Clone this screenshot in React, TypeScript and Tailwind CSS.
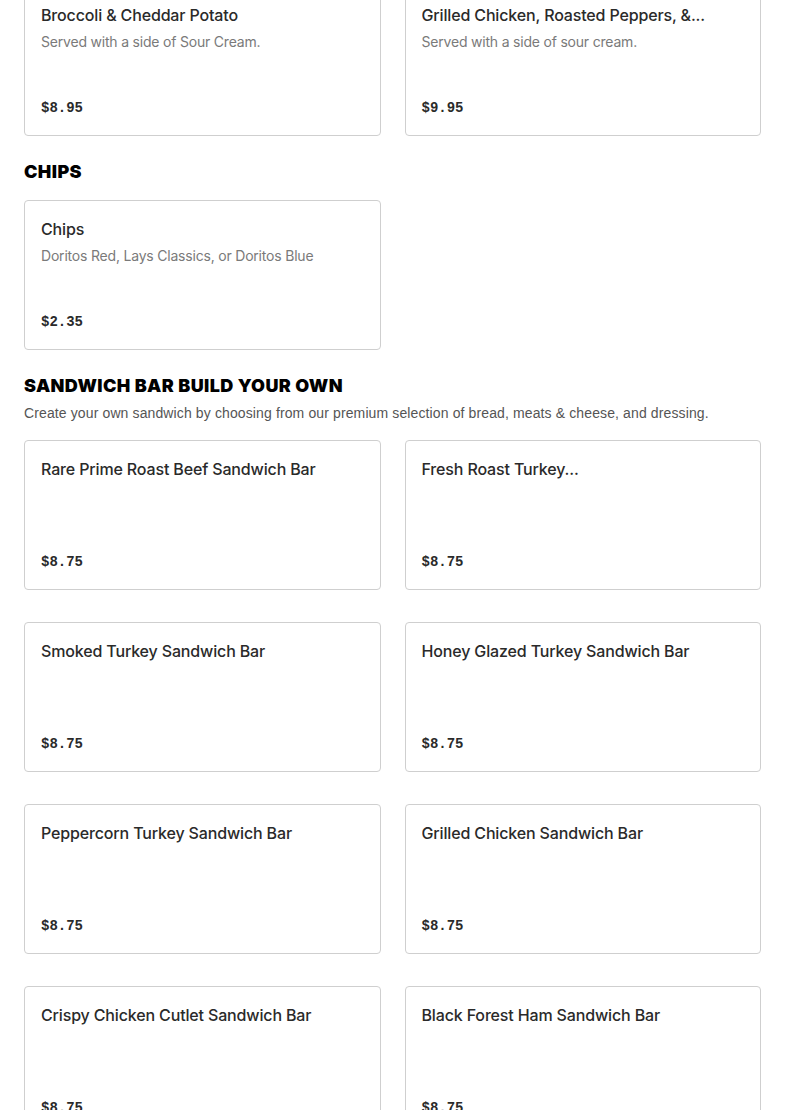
import React from "react";

type Item = {
  name: string;
  description?: string;
  price: string;
};

const potatoes: Item[] = [
  {
    name: "Broccoli & Cheddar Potato",
    description: "Served with a side of Sour Cream.",
    price: "$8.95",
  },
  {
    name: "Grilled Chicken, Roasted Peppers, &...",
    description: "Served with a side of sour cream.",
    price: "$9.95",
  },
];

const chips: Item[] = [
  {
    name: "Chips",
    description: "Doritos Red, Lays Classics, or Doritos Blue",
    price: "$2.35",
  },
];

const sandwichBar: Item[] = [
  { name: "Rare Prime Roast Beef Sandwich Bar", price: "$8.75" },
  { name: "Fresh Roast Turkey...", price: "$8.75" },
  { name: "Smoked Turkey Sandwich Bar", price: "$8.75" },
  { name: "Honey Glazed Turkey Sandwich Bar", price: "$8.75" },
  { name: "Peppercorn Turkey Sandwich Bar", price: "$8.75" },
  { name: "Grilled Chicken Sandwich Bar", price: "$8.75" },
  { name: "Crispy Chicken Cutlet Sandwich Bar", price: "$8.75" },
  { name: "Black Forest Ham Sandwich Bar", price: "$8.75" },
];

const MenuCard: React.FC<{ item: Item }> = ({ item }) => (
  <div className="h-[150px] flex flex-col rounded border border-[#cfcfcf] bg-white px-4 pt-4 pb-[17px]">
    <h3 className="text-[16px] leading-6 font-medium tracking-[-0.15px] text-[#2a2a2a] truncate font-['Inter',sans-serif]">
      {item.name}
    </h3>
    {item.description && (
      <p className="mt-[5px] text-[14px] leading-5 tracking-[-0.2px] text-[#7a7a7a] font-['Inter',sans-serif]">
        {item.description}
      </p>
    )}
    <div className="mt-auto text-[14px] leading-5 font-bold text-[#2a2a2a] font-['Liberation_Mono',monospace]">
      {item.price}
    </div>
  </div>
);

const Section: React.FC<{
  title?: string;
  subtitle?: string;
  items: Item[];
}> = ({ title, subtitle, items }) => (
  <section className="pt-6 first:pt-0">
    {title && (
      <h2 className="text-[18px] leading-6 font-black tracking-[0.4px] text-black uppercase font-['Inter',sans-serif]">
        {title}
      </h2>
    )}
    {subtitle && (
      <p className="mt-[5px] text-[14px] leading-5 tracking-[0.12px] text-[#555555] font-['Liberation_Sans',Arial,sans-serif]">
        {subtitle}
      </p>
    )}
    <div
      className={`grid grid-cols-2 gap-x-6 gap-y-8 ${title ? (subtitle ? "mt-[17px]" : "mt-4") : ""}`}
    >
      {items.map((item) => (
        <MenuCard key={item.name} item={item} />
      ))}
    </div>
  </section>
);

export default function App() {
  return (
    <div className="w-full min-h-[1110px] overflow-hidden bg-white">
      <div className="px-6 -mt-[14px] pb-10">
        <Section items={potatoes} />
        <Section title="Chips" items={chips} />
        <Section
          title="Sandwich Bar Build Your Own"
          subtitle="Create your own sandwich by choosing from our premium selection of bread, meats & cheese, and dressing."
          items={sandwichBar}
        />
      </div>
    </div>
  );
}
